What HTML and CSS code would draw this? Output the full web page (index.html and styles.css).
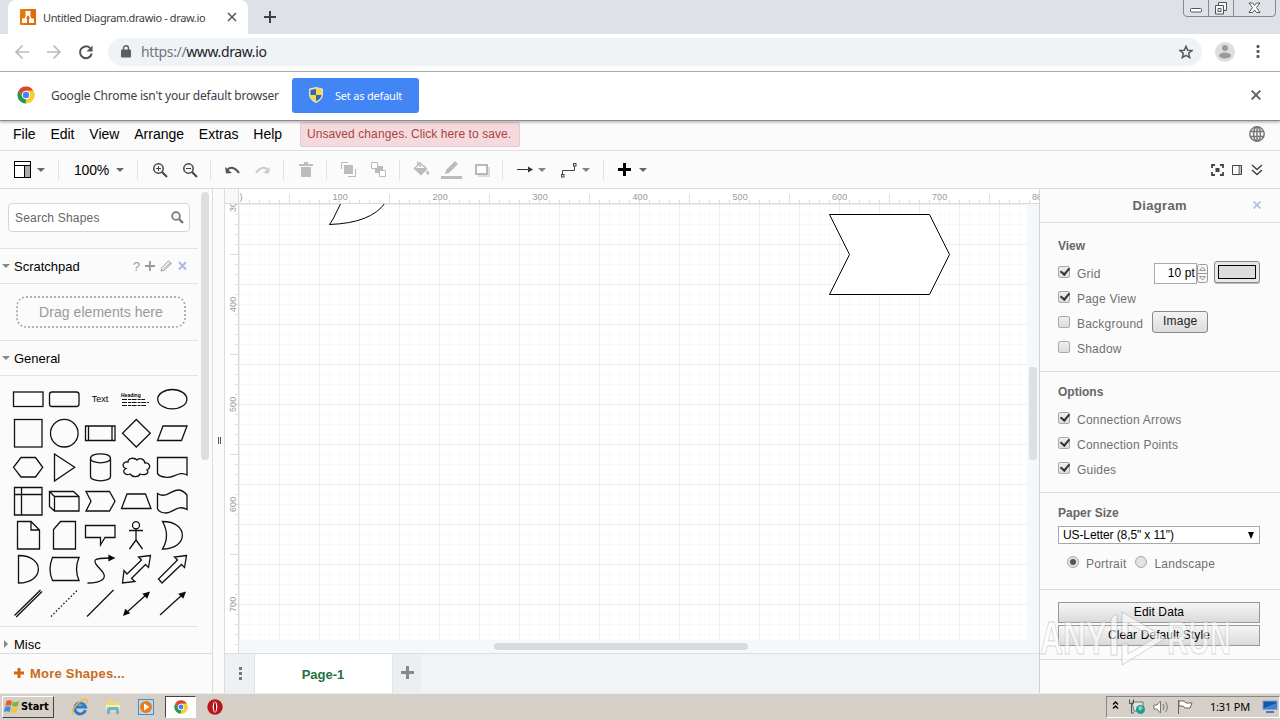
FILE: index.html
```html
<!DOCTYPE html>
<html lang="en">
<head>
<meta charset="utf-8">
<title>Untitled Diagram.drawio - draw.io</title>
<link rel="stylesheet" href="styles.css">
</head>
<body>
<svg class="defs" width="0" height="0">
  <symbol id="chrome" viewBox="0 0 18 18">
    <circle cx="9" cy="9" r="8.5" fill="#fbcb2f"/>
    <path d="M1.6 4.8A8.5 8.5 0 0 1 16.4 4.8H9L5.4 11z" fill="#dc4437"/>
    <path d="M1.6 4.8L5.5 11.2L9 13L8.8 17.5A8.5 8.5 0 0 1 1.6 4.8z" fill="#219a58"/>
    <path d="M9 4.8H16.4A8.5 8.5 0 0 1 8.8 17.5L12.6 11z" fill="#fbcb2f"/>
    <circle cx="9" cy="9" r="4.2" fill="#fff"/><circle cx="9" cy="9" r="3.2" fill="#4285f4"/>
  </symbol>
  <symbol id="caret" viewBox="0 0 8 4"><path d="M0 0H8L4 4z" fill="#666"/></symbol>
</svg>

<header class="tabstrip">
  <div class="tab">
    <svg width="16" height="16" viewBox="0 0 16 16"><rect width="16" height="16" rx="1" fill="#e8770b"/><path d="M9 0H16V16H6z" fill="#d35c05" opacity=".45"/><path d="M8 4L4.500 11M8 4L11.500 11" stroke="#fff" stroke-width="1.400"/><rect x="5.500" y="2" width="5" height="4.500" fill="#fff"/><rect x="2" y="9.500" width="5" height="4.500" fill="#fff"/><rect x="9" y="9.500" width="5" height="4.500" fill="#fff"/></svg>
    <span class="tab-title">Untitled Diagram.drawio - draw.io</span>
    <svg class="tab-close" width="10" height="10" viewBox="0 0 10 10"><path d="M1 1L9 9M9 1L1 9" stroke="#5b5e63" stroke-width="1.700"/></svg>
  </div>
  <svg class="new-tab" width="12" height="12" viewBox="0 0 12 12"><path d="M6 0V12M0 6H12" stroke="#3c4043" stroke-width="2"/></svg>
  <svg class="win-buttons" width="94" height="18" viewBox="0 0 94 18" fill="none" stroke="#848995"><path d="M.5 0V13Q.5 16.500 4 16.500H89Q92.500 16.500 92.500 13V0M25.500 0V16M50.500 0V16"/><rect x="7.500" y="8.500" width="11" height="3.500" rx="1" fill="#fff" stroke="#50545c"/><g stroke="#50545c" fill="#f7f7f7"><path d="M35.500 2.500H43.500V10.500H35.500z"/><path d="M32.500 5.500H40.500V14H32.500zM35 8.500H38V11.500H35z"/></g><path d="M66 3H69.500L71.500 5.500L73.500 3H77L73.500 7.500L77 12.500H73.500L71.500 10L69.500 12.500H66L69.500 7.500z" fill="#fff" stroke="#50545c"/></svg>
</header>

<div class="navbar">
  <svg class="nav-icons" width="80" height="16" viewBox="0 0 80 16" fill="none" stroke-width="1.700"><path d="M15 8H2M8.500 1.500L2 8L8.500 14.500M33 8H46M39.500 1.500L46 8L39.500 14.500" stroke="#b9bbbe"/><path d="M76 4A5.900 5.900 0 1 0 77.700 9.500" stroke="#505357" stroke-width="2"/><path d="M78.500 1.500V7.500H72.500z" fill="#505357"/></svg>
  <div class="omnibox">
    <svg width="10" height="13" viewBox="0 0 10 13"><rect x="0" y="4.500" width="10" height="8" rx="1" fill="#5a5d61"/><path d="M2.500 5V3.300A2.500 2.500 0 0 1 7.500 3.300V5" fill="none" stroke="#5a5d61" stroke-width="1.400"/></svg>
    <span class="url"><span>https://</span>www.draw.io</span>
    <svg class="star" width="14" height="14" viewBox="0 0 14 14"><path d="M7 1.200L8.700 5.200L13 5.500L9.700 8.300L10.700 12.600L7 10.300L3.300 12.600L4.300 8.300L1 5.500L5.300 5.200z" fill="none" stroke="#55585c" stroke-width="1.500"/></svg>
  </div>
  <svg width="20" height="20" viewBox="0 0 20 20"><circle cx="10" cy="10" r="10" fill="#dedede"/><circle cx="10" cy="6" r="3" fill="#9b9b9b"/><ellipse cx="10" cy="13.500" rx="6" ry="3" fill="#9b9b9b"/></svg>
  <svg class="kebab" width="4" height="14" viewBox="0 0 4 14" fill="#55585c"><rect x=".5" y="0" width="3" height="3" rx="1"/><rect x=".5" y="5" width="3" height="3" rx="1"/><rect x=".5" y="10" width="3" height="3" rx="1"/></svg>
</div>

<div class="infobar">
  <svg width="18" height="18"><use href="#chrome"/></svg>
  <span class="info-text">Google Chrome isn't your default browser</span>
  <button class="set-default">
    <svg width="14" height="16" viewBox="0 0 14 16"><path d="M7 .5L13.500 2V8Q13 13 7 15.500Q1 13 .5 8V2z" fill="#f7d94e" stroke="#dce4ea"/><path d="M7 2V8H1.500V3zM7 8H12.500Q12 12 7 14z" fill="#2f68b8"/></svg>
    <span>Set as default</span>
  </button>
  <svg class="info-close" width="10" height="10" viewBox="0 0 10 10"><path d="M.7 .7L9.300 9.300M9.300 .7L.7 9.300" stroke="#5b5e63" stroke-width="1.900"/></svg>
</div>

<nav class="menubar">
  <span>File</span><span>Edit</span><span>View</span><span>Arrange</span><span>Extras</span><span>Help</span>
  <div class="unsaved">Unsaved changes. Click here to save.</div>
  <svg class="globe" width="16" height="16" viewBox="0 0 16 16" fill="none" stroke="#777" stroke-width="1.500"><circle cx="8" cy="8" r="7.200"/><ellipse cx="8" cy="8" rx="3.400" ry="7.200"/><path d="M1 5.500H15M1 10.500H15M8 1V15"/></svg>
</nav>

<div class="toolbar">
  <svg width="650" height="37" viewBox="0 151 650 37" fill="none">
    <g stroke="#e2e2e2"><path d="M58.500 160V180M137.500 160V180M210.500 160V180M283.500 160V180M326.500 160V180M399.500 160V180M502.500 160V180M603.500 160V180"/></g>
    <rect x="14.500" y="161.500" width="16" height="16" stroke="#000" fill="#fff"/><rect x="25" y="166" width="5" height="11" fill="#aaa"/><path d="M14 165.500H31M24.500 166V177" stroke="#000"/>
    <g><use href="#caret" x="37" y="168" width="8" height="4"/><use href="#caret" x="116" y="168" width="8" height="4"/><use href="#caret" x="538" y="168" width="8" height="4" opacity=".8"/><use href="#caret" x="582" y="168" width="8" height="4" opacity=".8"/><use href="#caret" x="639" y="168" width="8" height="4"/></g>
    <text x="74" y="175" class="zoom-text">100%</text>
    <g stroke="#444" stroke-width="1.500"><circle cx="158.500" cy="168.500" r="4.700"/><path d="M162 172L167 177" stroke-width="2"/><path d="M156 168.500H161M158.500 166V171" stroke-width="1"/><circle cx="188.500" cy="168.500" r="4.700"/><path d="M192 172L197 177" stroke-width="2"/><path d="M186 168.500H191" stroke-width="1"/></g>
    <path d="M227 170Q233 164.500 239 173" stroke="#555" stroke-width="2"/><path d="M225 167L226 173.500L232 173z" fill="#555"/>
    <path d="M268 170Q262 164.500 256 173" stroke="#ccc" stroke-width="2"/><path d="M270 167L269 173.500L263 173z" fill="#ccc"/>
    <g fill="#bdbdbd"><path d="M299 164H304V162H308V164H313V166H299zM301 167H311V177H301z"/><rect x="344" y="165" width="9" height="9"/></g>
    <g stroke="#bababa"><path d="M341.500 169V162.500H348M348 176.500H355.500V169"/><rect x="375" y="166" width="8" height="7" fill="#bababa" stroke="none"/><path d="M371.500 162.500H377.500V168.500H371.500zM379.500 170.500H385.500V176.500H379.500z" fill="#fff"/></g>
    <path d="M414 169L420 163L427 169.500L421 175.500z" fill="#bbb"/><path d="M415 168L420 163L425 168z" fill="#fff"/><path d="M417 162L421 167M414 169L420 163L427 169" stroke="#bbb" stroke-width="1.500"/><path d="M427 170Q431 174 428 175Q425 174 427 170z" fill="#bbb"/>
    <path d="M445 174L446 170L455 161L458 164L449 173z" fill="#bbb"/><rect x="441" y="176" width="21" height="3" fill="#bbb"/>
    <path d="M489 167V176H478" stroke="#ddd" stroke-width="2"/><rect x="476" y="165" width="11" height="9" stroke="#b8b8b8" stroke-width="2" fill="#fff"/>
    <path d="M517 169.500H532" stroke="#333"/><path d="M528 166.500L533 169.500L528 172.500z" fill="#333"/>
    <path d="M562.500 175V170.500H574.500V166" stroke="#444"/><rect x="561.500" y="174.500" width="2.500" height="2.500" stroke="#444"/><rect x="573.500" y="163.500" width="2.500" height="2.500" stroke="#444"/>
    <path d="M624.500 163V176M618 169.500H631" stroke="#000" stroke-width="3"/>
  </svg>
  <svg width="54" height="14" viewBox="0 0 54 14" fill="none" stroke="#444"><path d="M2 5V2H5M10 2H13V5M13 9V12H10M5 12H2V9" stroke-width="1.800"/><rect x="6" y="5.500" width="3" height="3" fill="#444"/><path d="M22.500 2.500H31.500V11.500H22.500z"/><path d="M29.500 3V11" stroke="#888" stroke-width="2"/><path d="M42 2L47 6.500L52 2M42 7L47 11.500L52 7" stroke-width="1.500"/></svg>
</div>

<main class="workspace">
  <aside class="sidebar">
    <div class="sidebar-scroll">
      <div class="search-row"><div class="search"><span>Search Shapes</span><svg width="13" height="13" viewBox="0 0 13 13" fill="none" stroke="#777"><circle cx="5" cy="5" r="3.900" stroke-width="1.700"/><path d="M8 8L12 12" stroke-width="2.400"/></svg></div></div>
      <div class="section-title"><i class="down"></i><span>Scratchpad</span>
        <div class="pad-tools"><b>?</b><svg width="46" height="12" viewBox="0 0 46 12" fill="none"><path d="M6 1V11M1 6H11" stroke="#999" stroke-width="1.800"/><path d="M17 11L18 7.500L24.500 1L27.500 3.500L20.500 10zM19.500 9L26 3" stroke="#999"/><path d="M35 2L42 9.500M42 2L35 9.500" stroke="#abb9da" stroke-width="1.900"/></svg></div>
      </div>
      <div class="drop-row"><div class="drop">Drag elements here</div></div>
      <div class="section-title"><i class="down"></i><span>General</span></div>
      <div class="palette">
        <svg><rect x="3.500" y="10" width="29.500" height="14.500"/></svg>
        <svg><rect x="3.500" y="10" width="29.500" height="14.500" rx="2.500"/></svg>
        <svg><text x="18" y="20" text-anchor="middle" class="t-text">Text</text></svg>
        <svg><text x="3" y="15" class="t-head">Heading</text><path d="M4 17.500H27M4 20.500H31M4 23.500H28" stroke-dasharray="5 1 3 .6" stroke-width="1.100"/></svg>
        <svg><ellipse cx="18.300" cy="17.200" rx="14.600" ry="9.700"/></svg>
        <svg><rect x="4.500" y="3.500" width="27.500" height="27.500"/></svg>
        <svg><circle cx="18.300" cy="17.200" r="13.800"/></svg>
        <svg><path d="M3.500 10H33V24.500H3.500zM6.500 10V24.500M30 10V24.500"/></svg>
        <svg><path d="M18.300 3.500L32.300 17.300L18.300 31L4.500 17.300z"/></svg>
        <svg><path d="M9 10H33L27.500 24.500H3.500z"/></svg>
        <svg><path d="M11 7.500H25.500L32.700 17.300L25.500 27H11L3.500 17.300z"/></svg>
        <svg><path d="M8.500 4L28.700 17.300L8.500 31z"/></svg>
        <svg><path d="M8.500 8.500V26.500C8.500 32.200 28.500 32.200 28.500 26.500V8.500C28.500 2.200 8.500 2.200 8.500 8.500C8.500 14.200 28.500 14.200 28.500 8.500"/></svg>
        <svg><path d="M10 12C5 11 3 17 8 18.500C3 21 7 26 12 24C15 28 21 27 22 24C27 26 32 23 29 20C34 17 31 12 27 13C26 8 21 8 19 10C16 7 10 8 10 12z"/></svg>
        <svg><path d="M3.500 7.500H33V25C25 20 18 30 11 27Q6 27 3.500 23.500z"/></svg>
        <svg><path d="M4.500 3.500H32V31H4.500zM11.500 3.500V31M4.500 10.500H32"/></svg>
        <svg><path d="M3.500 7.500H27.500L33 12.500V27H8.500L3.500 22.500zM3.500 7.500L8.500 12.500H33M8.500 12.500V27"/></svg>
        <svg><path d="M4 7.500H27.500L33 17.300L27.500 27H4L9 17.300z"/></svg>
        <svg><path d="M9 10H27.500L33 24.500H3.500z"/></svg>
        <svg><path d="M3.500 9.500C12 15 17 6 24 6Q29 6 33 11V25.500C24 20 19 29 12 29Q6 29 3.500 25z"/></svg>
        <svg><path d="M7.500 3.500H21L29.500 12V31H7.500zM21 3.500V12H29.500"/></svg>
        <svg><path d="M14.500 3.500H29.500V31H7.500V11.500z"/></svg>
        <svg><path d="M3.500 7.500H33V19.500H23L18.500 27V19.500H3.500z"/></svg>
        <svg><circle cx="18" cy="7.200" r="3.500"/><path d="M18 10.700V22M11 12.500H25M18 22L11.500 31M18 22L24.500 31"/></svg>
        <svg><path d="M8.500 3.500Q16.500 17.500 8.500 31C35 31 35 3.500 8.500 3.500z"/></svg>
        <svg><path d="M8.500 3.500C35 3.500 35 31 8.500 31z"/></svg>
        <svg><path d="M6.500 5.500H33Q28 17 33 28.500H6.500Q1.500 17 6.500 5.500z"/></svg>
        <svg><path d="M5.500 31C20 31 27 26 19 18C8 7 12 6 28 6"/><path d="M27 3.500L32 6L27 8.500z" fill="#000"/></svg>
        <svg><path d="M32.500 3.500L20.500 5L23.500 8L9 22L6 18.500L4.500 31L17 29.500L13.500 26.500L27.500 12.500L30.500 15.500z"/></svg>
        <svg><path d="M32.500 3.500L20.500 5L23.500 8L4.500 27L8 31L27.500 12.500L30.500 15.500z"/></svg>
        <svg><path d="M4.500 29.500L30.500 4M6.200 31L32 5.500"/></svg>
        <svg><path d="M5 30.500L31.500 4" stroke-dasharray="1.500 2"/></svg>
        <svg><path d="M5 30.500L31.500 4"/></svg>
        <svg><path d="M8 27L28.500 8.500"/><path d="M6 29L7.500 24L11 27zM31 6.500L29 11.500L25.500 8z" fill="#000"/></svg>
        <svg><path d="M6 29L28.500 8.500"/><path d="M31 6.500L29 11.500L25.500 8z" fill="#000"/></svg>
      </div>
      <div class="section-title misc"><i class="right"></i><span>Misc</span></div>
      <div class="scroll-thumb"></div>
    </div>
    <div class="more-shapes"><svg width="10" height="10" viewBox="0 0 10 10"><path d="M5 0V10M0 5H10" stroke="#d3670f" stroke-width="3"/></svg>More Shapes...</div>
  </aside>
  <div class="splitter"><i></i></div>

  <section class="editor">
    <svg class="canvas" width="814" height="464" viewBox="225 189 814 464">
      <defs>
        <pattern id="grid" x="239" y="204" width="40" height="40" patternUnits="userSpaceOnUse"><path d="M10.500 0V40M20.500 0V40M30.500 0V40M0 10.500H40M0 20.500H40M0 30.500H40" stroke="#f9f9f9"/><path d="M.5 0V40M0 .5H40" stroke="#eeeeee"/></pattern>
        <pattern id="hticks" x="239" y="189" width="100" height="15" patternUnits="userSpaceOnUse"><path d="M.5 11V15M10.500 11V15M20.500 11V15M30.500 11V15M40.500 11V15M50.500 5V15M60.500 11V15M70.500 11V15M80.500 11V15M90.500 11V15" stroke="#dedede"/></pattern>
        <pattern id="vticks" x="225" y="204" width="14" height="100" patternUnits="userSpaceOnUse"><path d="M10 .5H14M10 10.500H14M10 20.500H14M10 30.500H14M10 40.500H14M5 50.500H14M10 60.500H14M10 70.500H14M10 80.500H14M10 90.500H14" stroke="#dedede"/></pattern>
        <clipPath id="sheet"><rect x="239" y="204" width="800" height="449"/></clipPath>
        <clipPath id="vrule"><rect x="225" y="204" width="14" height="449"/></clipPath>
      </defs>
      <rect x="225" y="189" width="814" height="464" fill="#f5f8fb"/>
      <rect x="239" y="204" width="788" height="436" fill="#fff"/><rect x="239" y="204" width="788" height="436" fill="url(#grid)"/>
      <rect x="225" y="189" width="814" height="15" fill="#fff"/><rect x="240" y="189" width="799" height="15" fill="url(#hticks)"/>
      <rect x="225" y="204" width="14" height="449" fill="#fff"/><rect x="225" y="204" width="14" height="449" fill="url(#vticks)"/>
      <rect x="225" y="189" width="14" height="15" fill="#f8f8f8"/>
      <path d="M225 203.500H1039M238.500 189V653" stroke="#dadada" fill="none"/>
      <g class="ruler-text"><text x="239.500" y="200">)</text><text x="332.500" y="200">100</text><text x="432.500" y="200">200</text><text x="532.500" y="200">300</text><text x="632.500" y="200">400</text><text x="732.500" y="200">500</text><text x="832" y="200">600</text><text x="932" y="200">700</text><text x="1032" y="200">800</text></g>
      <g class="ruler-text" clip-path="url(#vrule)"><text transform="translate(236 212) rotate(-90)">300</text><text transform="translate(236 312) rotate(-90)">400</text><text transform="translate(236 412) rotate(-90)">500</text><text transform="translate(236 512) rotate(-90)">600</text><text transform="translate(236 612) rotate(-90)">700</text></g>
      <g clip-path="url(#sheet)" stroke="#000" fill="#fff"><path d="M341 203L336.500 212Q333 220 329.500 224.500Q371 223 385 203"/><path d="M829.500 214.500H929.500L949.500 254.500L929.500 294.500H829.500L849.500 254.500z"/></g>
      <rect x="1029" y="367" width="8" height="93" rx="3" fill="#dce0e3"/><rect x="494" y="643" width="254" height="7" rx="3" fill="#d9dcdf"/>
    </svg>
    <div class="pages">
      <div class="page-menu"><svg width="4" height="13" viewBox="0 0 4 13" fill="#777"><rect width="3" height="3"/><rect y="5" width="3" height="3"/><rect y="10" width="3" height="3"/></svg></div>
      <div class="page-tab">Page-1</div>
      <div class="page-add"><svg width="13" height="13" viewBox="0 0 13 13"><path d="M6.500 0V13M0 6.500H13" stroke="#888" stroke-width="3"/></svg></div>
    </div>
  </section>

  <aside class="format">
    <div class="format-head">Diagram<svg width="8" height="8" viewBox="0 0 8 8"><path d="M.5 .5L7.500 7.500M7.500 .5L.5 7.500" stroke="#b3c6e3" stroke-width="1.900"/></svg></div>
    <div class="group view">
      <h3>View</h3>
      <div class="opt"><i class="box on"></i><span>Grid</span>
        <div class="grid-tools"><div class="num">10 pt</div><svg width="11" height="19" viewBox="0 0 11 19" fill="#f6f6f6" stroke="#999"><rect x=".5" y=".5" width="10" height="18" rx="2"/><path d="M0 9.500H11M2.500 6.500L5.500 3L8.500 6.500zM2.500 12.500L5.500 16L8.500 12.500z"/></svg><div class="swatch"><i></i></div></div></div>
      <div class="opt"><i class="box on"></i><span>Page View</span></div>
      <div class="opt"><i class="box"></i><span>Background</span><div class="image-btn">Image</div></div>
      <div class="opt"><i class="box"></i><span>Shadow</span></div>
    </div>
    <div class="group options">
      <h3>Options</h3>
      <div class="opt"><i class="box on"></i><span>Connection Arrows</span></div>
      <div class="opt"><i class="box on"></i><span>Connection Points</span></div>
      <div class="opt"><i class="box on"></i><span>Guides</span></div>
    </div>
    <div class="group paper">
      <h3>Paper Size</h3>
      <div class="select"><span>US-Letter (8,5" x 11")</span><i></i></div>
      <div class="radios"><i class="radio on"></i><span>Portrait</span><i class="radio"></i><span>Landscape</span></div>
    </div>
    <div class="group actions"><div class="wide">Edit Data</div><div class="wide">Clear Default Style</div></div>
    <svg class="watermark" width="196" height="64" viewBox="0 0 196 64"><g fill="#fff" fill-opacity=".6" stroke="#999" stroke-opacity=".4"><text x="2" y="46" textLength="67" lengthAdjust="spacingAndGlyphs">ANY</text><text x="129" y="46" textLength="64" lengthAdjust="spacingAndGlyphs">RUN</text><path d="M73 12Q73 8 79 6V47H73zM84 4L128 30L84 57V36H90V46L117 30L90 15V27H84z"/></g></svg>
  </aside>
</main>

<footer class="taskbar">
  <div class="start"><svg width="16" height="15" viewBox="0 0 16 15"><path d="M2.500 2Q5 .5 8 2L7 7Q4 5.500 1.300 7z" fill="#e95b2c"/><path d="M9 2.500Q12 4 15 2L14 7Q11 8.500 8 7z" fill="#78b83a"/><path d="M1 8Q4 6.500 6.800 8L5.600 13Q3 11.500 0 13z" fill="#3c8cd8"/><path d="M7.800 8.500Q11 10 13.700 8L12.500 13Q10 14.500 6.600 13z" fill="#f6c52a"/></svg>Start</div>
  <svg class="ie" width="18" height="18" viewBox="0 0 18 18" fill="none"><path d="M14.500 12A5.500 5.500 0 1 1 14.500 9H5" stroke="#2a7fc9" stroke-width="3"/><path d="M2 16Q-1 15 4.500 8Q12 0 15.500 1.500Q17.500 3 14.500 6" stroke="#edbd37" stroke-width="1.400"/></svg>
  <svg width="18" height="18" viewBox="0 0 18 18"><path d="M2 4L8 2L9 4L16 5V14H2z" fill="#efd878"/><path d="M2 7H16V12H2z" fill="#f9edb0"/><path d="M3 16V11Q3 9 6 9H12Q15 9 15 11V16H12V12H6V16z" fill="#69b4df"/></svg>
  <svg width="18" height="18" viewBox="0 0 18 18"><rect x="1.500" y="1.500" width="15" height="15" fill="#b9d9ef" stroke="#4e8cc0"/><circle cx="9" cy="9" r="6" fill="#ed7a12"/><path d="M7 5.500L12.500 9L7 12.500z" fill="#fff"/></svg>
  <div class="task-active"><svg width="14" height="14"><use href="#chrome"/></svg></div>
  <svg width="16" height="16" viewBox="0 0 16 16"><circle cx="8" cy="8" r="7.700" fill="#b9151b"/><ellipse cx="8" cy="8" rx="2.300" ry="5.500" fill="#fff"/><ellipse cx="8" cy="8" rx="1" ry="5" fill="#a5070f"/></svg>
  <div class="tray">
    <svg width="92" height="18" viewBox="0 0 92 18" fill="none"><path d="M6 6.500L8.500 4L11 6.500M6 10.500L8.500 8L11 10.500" stroke="#000" stroke-width="1.400"/><path d="M25 4H36V13H27z" fill="#d8e7e7" stroke="#687879"/><path d="M22.500 1.500V5.500H26.500V1.500M24.500 5V15H27" stroke="#555"/><circle cx="33.500" cy="11.500" r="4.500" fill="#249b8c"/><path d="M31 10Q33 6 36 10L33 13z" fill="#85d6c0"/><path d="M47 7H50L53.500 3V15L50 11H47z" fill="#fff" stroke="#777"/><path d="M56 6Q58 9 56 12M58.500 4Q62 9 58.500 14" stroke="#777"/><path d="M71.500 16V2M72 3H77L79 5H85L83 10H78L76 8H72z" fill="#fff" stroke="#666"/></svg>
    <span>1:31 PM</span>
    <svg width="16" height="13" viewBox="0 0 16 13"><path d="M1 1H15V9.500H1z" fill="#1456ac" stroke="#7fa1d1"/><path d="M4 12H12" stroke="#5577a8" stroke-width="2"/><path d="M1.500 8L15 3V9H2z" fill="#3e82d3"/></svg>
  </div>
</footer>
</body>
</html>
```
FILE: styles.css
```css
* { box-sizing: border-box; }
body { margin: 0; width: 1280px; height: 720px; overflow: hidden; display: flex; flex-direction: column; font-family: "Liberation Sans", Arial, sans-serif; background: #fbfbfb; color: #000; }
svg { display: block; flex: none; }
span, .unsaved, .drop, .more-shapes { white-space: nowrap; }
.defs { position: absolute; }

/* browser chrome */
.tabstrip { height: 34px; flex: none; background: #dee1e6; display: flex; align-items: center; padding-left: 8px; }
.tab { width: 240px; height: 34px; background: #fff; border-radius: 8px 8px 0 0; display: flex; align-items: center; padding: 0 11px 0 12px; }
.tab-title { font: 11px "Noto Sans", sans-serif; letter-spacing: -.37px; margin-left: 7px; color: #3c4043; }
.tab-close { margin-left: auto; }
.new-tab { margin-left: 16px; }
.win-buttons { margin-left: auto; margin-right: 3px; align-self: flex-start; }
.navbar { height: 38px; flex: none; background: #fff; border-bottom: 1px solid #b5b6b7; display: flex; align-items: center; padding: 0 20px 2px 14px; }
.nav-icons { margin-right: 14px; }
.omnibox { width: 1095px; height: 28px; background: #f0f3f5; border-radius: 14px; display: flex; align-items: center; padding: 0 9px 0 13px; margin-right: 13px; }
.url { font: 14px "Noto Sans", sans-serif; margin-left: 10px; color: #202124; letter-spacing: -.38px; }
.url span { color: #70757a; }
.star { margin-left: auto; }
.kebab { margin-left: 21px; }
.infobar { height: 49px; flex: none; background: #fff; display: flex; align-items: center; padding: 0 19px 2px 17px; border-bottom: 1px solid #8c8c8c; box-shadow: 0 1px 3px rgba(0,0,0,.35); position: relative; z-index: 2; }
.info-text { font: 12px "Noto Sans", sans-serif; color: #3c4043; letter-spacing: -.2px; margin-left: 16px; width: 241px; }
.set-default { width: 127px; height: 35px; border: 0; border-radius: 3px; background: #4285f4; color: #fff; font: 11px "Noto Sans", sans-serif; letter-spacing: -.2px; display: flex; align-items: center; gap: 12px; padding: 0 0 0 17px; }
.info-close { margin-left: auto; }

/* application bars */
.menubar { height: 30px; flex: none; display: flex; align-items: center; gap: 15px; padding: 0 15px 3px 13px; font-size: 14px; border-bottom: 1px solid #e0e0e0; }
.menubar > span { margin-right: -.2px; }
.unsaved { width: 220px; height: 25px; border: 1px solid #e6c9cc; border-radius: 2px; background: #f5dadd; color: #a94442; font-size: 12px; line-height: 22px; padding-left: 6px; letter-spacing: .08px; margin-left: 3px; }
.globe { margin-left: auto; }
.toolbar { height: 38px; flex: none; display: flex; justify-content: space-between; align-items: center; padding-right: 16px; border-bottom: 1px solid #dadada; }
.zoom-text { font-size: 14px; fill: #000; letter-spacing: -.2px; }
.workspace { height: 504px; flex: none; display: flex; }

/* shape sidebar */
.sidebar { width: 213px; border-right: 1px solid #dcdcdc; display: flex; flex-direction: column; }
.sidebar-scroll { height: 465px; border-bottom: 1px solid #dcdcdc; position: relative; }
.scroll-thumb { position: absolute; left: 201px; top: 3px; width: 8px; height: 268px; border-radius: 4px; background: #dedede; }
.search-row { width: 198px; height: 60px; border-bottom: 1px solid #e2e2e2; padding: 14px 8px; }
.search { width: 182px; height: 29px; border: 1px solid #d5d5d5; border-radius: 4px; background: #fff; display: flex; align-items: center; justify-content: space-between; padding: 0 5px 0 6px; font-size: 12px; letter-spacing: .2px; color: #666; }
.section-title { width: 198px; height: 35px; border-bottom: 1px solid #e2e2e2; display: flex; align-items: center; font-size: 13px; padding: 0 8px 0 2px; }
.section-title.misc { height: 34px; border: 0; }
.down { border: 4px solid transparent; border-top-color: #888; border-bottom: 0; margin-right: 4px; }
.right { border: 4px solid transparent; border-left-color: #888; border-right: 0; margin: 0 6px 0 2px; }
.pad-tools { margin-left: auto; display: flex; align-items: center; gap: 4px; color: #999; }
.pad-tools b { font-weight: normal; }
.drop-row { width: 198px; height: 57px; border-bottom: 1px solid #e2e2e2; padding: 12px 12px 0 16px; }
.drop { height: 32px; border: 2px dotted #b2b2b2; border-radius: 10px; text-align: center; line-height: 28px; font-size: 14px; color: #999; letter-spacing: .05px; }
.palette { width: 198px; height: 251px; border-bottom: 1px solid #e2e2e2; padding: 6px 8px 0 10px; display: grid; grid-template-columns: repeat(5, 36px); grid-auto-rows: 34px; }
.palette svg { width: 36px; height: 34px; fill: none; stroke: #111; stroke-width: 1.300px; }
.palette text { fill: #000; stroke: none; }
.t-text { font-size: 9px; }
.t-head { font-size: 5px; font-weight: bold; }
.more-shapes { flex: 1; display: flex; align-items: center; gap: 6px; padding-left: 14px; font-size: 13px; font-weight: bold; letter-spacing: .22px; color: #c96a20; }
.more-shapes svg { margin-bottom: 2px; }
.splitter { width: 12px; border-right: 1px solid #dcdcdc; display: flex; align-items: center; justify-content: center; padding: 0 0 2px 2px; }
.splitter i { width: 3px; height: 7px; border: solid #555; border-width: 0 1px; }

/* drawing area */
.editor { width: 814px; display: flex; flex-direction: column; }
.ruler-text { font-size: 9px; fill: #999; letter-spacing: .1px; }
.pages { flex: 1; border-top: 1px solid #dde0e3; background: #f0f4f7; display: flex; }
.page-menu { width: 30px; display: flex; align-items: center; justify-content: center; padding-left: 2px; background: #eef1f3; border-right: 1px solid #e2e5e8; }
.page-tab { width: 138px; background: #fff; color: #22733c; font-size: 13px; font-weight: bold; display: flex; align-items: center; justify-content: center; border-right: 1px solid #e2e5e8; padding: 2px 1px 0 0; }
.page-add { width: 28px; display: flex; align-items: center; justify-content: center; background: #eceff1; padding-bottom: 3px; }

/* format panel */
.format { width: 241px; border-left: 1px solid #d2d2d2; color: #707070; font-size: 12px; letter-spacing: .22px; position: relative; }
.format-head { height: 34px; border-bottom: 1px solid #dcdcdc; display: flex; align-items: center; justify-content: flex-end; gap: 66px; padding: 0 19px 1px 0; font-size: 13px; font-weight: bold; letter-spacing: .35px; color: #666; }
.group { border-bottom: 1px solid #dcdcdc; padding: 0 20px 0 18px; }
h3 { margin: 0; font-size: 12px; line-height: 16px; letter-spacing: 0; color: #666; }
.view { height: 149px; padding-top: 15px; }
.view h3 { margin-bottom: 6px; }
.opt { height: 25px; display: flex; align-items: center; }
.opt > span { padding-top: 2px; }
.box { width: 12px; height: 12px; border: 1px solid #aaa; border-radius: 2px; background: linear-gradient(#eee, #ddd); margin: 0 7px 2px 0; }
.box.on::after { content: ""; display: block; width: 4px; height: 7px; margin: -1px 0 0 3px; border: solid #333; border-width: 0 2px 2px 0; transform: rotate(40deg); }
.grid-tools { margin: 1px 0 0 auto; display: flex; align-items: center; }
.num { width: 43px; height: 21px; border: 1px solid #aaa; background: #fff; color: #000; text-align: right; line-height: 19px; letter-spacing: .1px; padding-right: 1px; }
.swatch { width: 46px; height: 22px; margin: 0 0 3px 6px; border: 1px solid #888; border-radius: 3px; background: #e8e8e8; padding: 3px; box-shadow: 0 1px #bbb; }
.swatch i { display: block; height: 14px; border: 1px solid #000; background: #ddd; }
.image-btn { width: 56px; height: 22px; margin: 0 0 1px 9px; border: 1px solid #888; border-radius: 3px; background: linear-gradient(#f3f3f3, #dcdcdc); text-align: center; line-height: 19px; color: #222; }
.options { height: 121px; padding-top: 12px; }
.options h3 { margin-bottom: 6px; }
.paper { height: 97px; padding-top: 12px; }
.select { height: 18px; margin-top: 5px; border: 1px solid #a9a9a9; background: #fff; color: #000; letter-spacing: -.1px; display: flex; align-items: center; justify-content: space-between; padding: 0 5px 0 4px; }
.select i { border: 3.500px solid transparent; border-top: 7px solid #000; border-bottom: 0; }
.radios { display: flex; align-items: center; padding: 12px 0 0 9px; }
.radios span { padding-top: 1px; }
.radio { width: 12px; height: 12px; border: 1px solid #aaa; border-radius: 50%; background: #e2e2e2; margin: 0 7px 3px 0; padding: 2px; }
.radio.on::after { content: ""; display: block; width: 6px; height: 6px; border-radius: 50%; background: #555; }
.radios span + .radio { margin-left: 9px; }
.actions { height: 70px; padding-top: 12px; }
.wide { height: 21px; margin-bottom: 2px; border: 1px solid #999; background: linear-gradient(#f6f6f6, #dadada); text-align: center; line-height: 19px; color: #000; letter-spacing: .1px; }
.watermark { position: absolute; left: -2px; top: 419px; }
.watermark text { font-size: 46px; font-weight: bold; letter-spacing: 0; }

/* desktop taskbar */
.taskbar { height: 27px; flex: none; border-top: 1px solid #eeece8; background: #d5cfc7; display: flex; align-items: center; padding: 0 0 1px 2px; }
.start { width: 52px; height: 22px; border: 1px solid; border-color: #fff #444 #444 #fff; display: flex; align-items: center; gap: 1px; padding-left: 1px; font: bold 11px "DejaVu Sans Condensed", "DejaVu Sans", sans-serif; letter-spacing: -.1px; }
.taskbar > svg { margin-right: 15px; }
.taskbar > .ie { margin-left: 17px; }
.task-active { width: 31px; height: 22px; margin: 0 11px 0 -5px; background: #fff; border: 1px solid; border-color: #444 #fff #fff #444; display: flex; align-items: center; justify-content: center; }
.tray { width: 174px; height: 22px; margin-left: auto; border: 1px solid; border-color: #888 #fff #fff #888; display: flex; align-items: center; font: 11px "Noto Sans", sans-serif; letter-spacing: -.2px; }
.tray span { margin: 0 12px 0 11px; }
```
